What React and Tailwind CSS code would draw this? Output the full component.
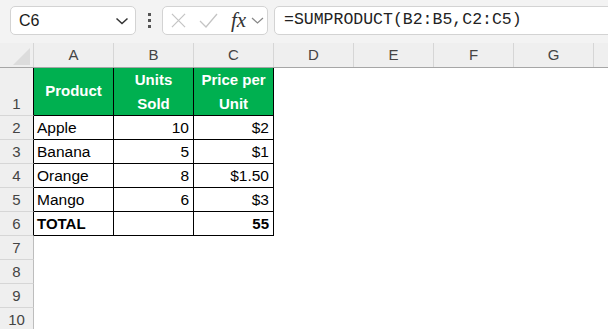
import React from 'react';

const cols = ['A', 'B', 'C', 'D', 'E', 'F', 'G'];

const rows = [
  { n: 2, a: 'Apple', b: '10', c: '$2' },
  { n: 3, a: 'Banana', b: '5', c: '$1' },
  { n: 4, a: 'Orange', b: '8', c: '$1.50' },
  { n: 5, a: 'Mango', b: '6', c: '$3' },
];

const font = { fontFamily: '"Liberation Sans", Arial, sans-serif' };

const RowHead = ({ n, dark, tall }) => (
  <div
    className={`w-[34px] shrink-0 flex items-end justify-center bg-[#efefef] border-r border-b text-[15px] text-[#444] ${
      dark ? 'border-r-black' : 'border-r-[#bdbdbd]'
    } border-b-[#d6d6d6] ${tall ? 'h-[48px]' : 'h-[24px]'}`}
  >
    <span className="leading-[22px]">{n}</span>
  </div>
);

const App = () => {
  return (
    <div className="w-[608px] h-[329px] overflow-hidden bg-white text-black" style={font}>
      {/* formula toolbar */}
      <div className="h-[43px] bg-[#f3f3f3] flex items-start pt-[6px] pl-[10px] overflow-hidden">
        <div className="w-[126px] h-[29px] shrink-0 bg-white border border-[#d3d3d3] rounded-[5px] flex items-center justify-between pl-[8px] pr-[6px]">
          <span className="text-[16px] text-[#1a1a1a]">C6</span>
          <svg width="14" height="10" viewBox="0 0 14 10" fill="none" stroke="#333" strokeWidth="1.5">
            <path d="M1.5 2.5 L7 7.5 L12.5 2.5" />
          </svg>
        </div>
        <div className="w-[26px] h-[29px] shrink-0 flex flex-col items-center justify-center gap-[3px]">
          <div className="w-[3px] h-[3px] bg-[#555]" />
          <div className="w-[3px] h-[3px] bg-[#555]" />
          <div className="w-[3px] h-[3px] bg-[#555]" />
        </div>
        <div className="w-[106px] h-[29px] shrink-0 bg-white border border-[#d3d3d3] rounded-[5px] flex items-center pl-[8px]">
          <svg width="15" height="15" viewBox="0 0 16 16" fill="none" stroke="#c4c4c4" strokeWidth="1.3">
            <path d="M1 1 L15 15 M15 1 L1 15" />
          </svg>
          <svg className="ml-[13px]" width="19" height="15" viewBox="0 0 19 15" fill="none" stroke="#c4c4c4" strokeWidth="1.3">
            <path d="M1 8 L7 14 L18 1" />
          </svg>
          <span
            className="ml-[13px] text-[21px] italic text-[#333] leading-none"
            style={{ fontFamily: '"Liberation Serif", "Times New Roman", serif' }}
          >
            fx
          </span>
          <svg className="ml-[5px]" width="13" height="9" viewBox="0 0 13 9" fill="none" stroke="#888" strokeWidth="1.2">
            <path d="M1 2 L6.5 7 L12 2" />
          </svg>
        </div>
        <div className="ml-[6px] w-[400px] h-[29px] shrink-0 bg-white border border-[#d3d3d3] rounded-[5px] flex items-center pl-[9px]">
          <span
            className="text-[16.5px] text-[#222]"
            style={{ fontFamily: '"Liberation Mono", "DejaVu Sans Mono", monospace' }}
          >
            =SUMPRODUCT(B2:B5,C2:C5)
          </span>
        </div>
      </div>

      {/* column headers */}
      <div className="flex h-[25px] bg-[#efefef] border-b border-[#a6a6a6]">
        <div className="w-[34px] shrink-0 border-r border-[#d6d6d6] flex items-end justify-end pr-[3px] pb-[2px]">
          <svg width="17" height="17" viewBox="0 0 17 17">
            <path d="M17 0 L17 17 L0 17 Z" fill="#dcdcdc" />
          </svg>
        </div>
        {cols.map((c) => (
          <div
            key={c}
            className="w-[80px] shrink-0 border-r border-[#d6d6d6] flex items-center justify-center text-[15px] text-[#444]"
          >
            {c}
          </div>
        ))}
        <div className="flex-1" />
      </div>

      {/* row 1 */}
      <div className="flex">
        <RowHead n={1} dark tall />
        <div className="w-[80px] h-[48px] shrink-0 bg-[#00b050] border-r border-b border-black flex items-center justify-center text-white font-bold text-[15px]">
          Product
        </div>
        <div className="w-[80px] h-[48px] shrink-0 bg-[#00b050] border-r border-b border-black flex flex-col items-center justify-center text-white font-bold text-[15px] leading-[24px]">
          <span>Units</span>
          <span>Sold</span>
        </div>
        <div className="w-[80px] h-[48px] shrink-0 bg-[#00b050] border-r border-b border-black flex flex-col items-center justify-center text-white font-bold text-[15px] leading-[24px]">
          <span>Price per</span>
          <span>Unit</span>
        </div>
      </div>

      {/* data rows */}
      {rows.map((r) => (
        <div key={r.n} className="flex">
          <RowHead n={r.n} dark />
          <div className="w-[80px] h-[24px] shrink-0 border-r border-b border-black flex items-end pl-[3px] text-[15.5px] leading-[22px]">
            {r.a}
          </div>
          <div className="w-[80px] h-[24px] shrink-0 border-r border-b border-black flex items-end justify-end pr-[4px] text-[15.5px] leading-[22px]">
            {r.b}
          </div>
          <div className="w-[80px] h-[24px] shrink-0 border-r border-b border-black flex items-end justify-end pr-[4px] text-[15.5px] leading-[22px]">
            {r.c}
          </div>
        </div>
      ))}

      {/* total */}
      <div className="flex">
        <RowHead n={6} dark />
        <div className="w-[80px] h-[24px] shrink-0 border-r border-b border-black flex items-end pl-[3px] text-[15px] font-bold leading-[22px]">
          TOTAL
        </div>
        <div className="w-[80px] h-[24px] shrink-0 border-r border-b border-black" />
        <div className="w-[80px] h-[24px] shrink-0 border-r border-b border-black flex items-end justify-end pr-[4px] text-[15px] font-bold leading-[22px]">
          55
        </div>
      </div>

      {[7, 8, 9, 10].map((n) => (
        <div key={n} className="flex">
          <RowHead n={n} />
        </div>
      ))}
    </div>
  );
};

export default App;
